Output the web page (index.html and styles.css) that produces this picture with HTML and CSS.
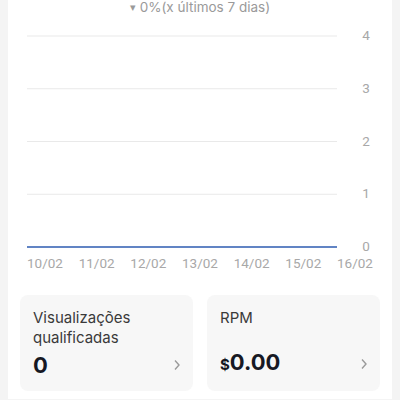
FILE: index.html
```html
<!DOCTYPE html>
<html>
<head>
  <title>Estatísticas</title>
  <link rel="stylesheet" href="styles.css">
</head>
<body>
  <div class="panel">
    <p class="change"><span class="caret">&#9662;</span> 0%(x últimos 7 dias)</p>
    <svg class="chart" width="384" height="280" viewBox="0 0 384 280">
      <g class="grid">
        <line x1="19" y1="36" x2="329" y2="36"/>
        <line x1="19" y1="88.75" x2="329" y2="88.75"/>
        <line x1="19" y1="141.5" x2="329" y2="141.5"/>
        <line x1="19" y1="194.25" x2="329" y2="194.25"/>
      </g>
      <line class="series" x1="19" y1="247" x2="329" y2="247"/>
      <g class="y-labels">
        <text x="358" y="40">4</text>
        <text x="358" y="93">3</text>
        <text x="358" y="146">2</text>
        <text x="358" y="198">1</text>
        <text x="358" y="251">0</text>
      </g>
      <g class="x-labels">
        <text x="19" y="268">10/02</text>
        <text x="70.7" y="268">11/02</text>
        <text x="122.3" y="268">12/02</text>
        <text x="174" y="268">13/02</text>
        <text x="225.7" y="268">14/02</text>
        <text x="277.3" y="268">15/02</text>
        <text x="329" y="268">16/02</text>
      </g>
    </svg>
    <div class="cards">
      <div class="card">
        <div class="card-title">Visualizações qualificadas</div>
        <div class="card-value">
          <span>0</span>
          <svg class="chevron" width="8" height="12" viewBox="0 0 8 12"><polyline points="2,1.5 6,6 2,10.5"/></svg>
        </div>
      </div>
      <div class="card">
        <div class="card-title">RPM</div>
        <div class="card-value">
          <span><small>$</small>0.00</span>
          <svg class="chevron" width="8" height="12" viewBox="0 0 8 12"><polyline points="2,1.5 6,6 2,10.5"/></svg>
        </div>
      </div>
    </div>
  </div>
</body>
</html>
```

FILE: styles.css
```css
* {
  box-sizing: border-box;
  font-family: Inter, Roboto, "Liberation Sans", sans-serif;
}
body {
  margin: 0;
  background-color: #f4f4f4;
  overflow: hidden;
}
.panel {
  margin: 0 8px;
  height: 400px;
  background-color: white;
}
.change {
  margin: -1px 0 0;
  text-align: center;
  font-size: 13.5px;
  line-height: 16px;
  color: #9a9a9a;
}
.caret {
  font-size: 11px;
  vertical-align: 1px;
}
.chart {
  display: block;
  margin-top: -15px;
}
.grid line {
  stroke: #e9e9e9;
  stroke-width: 1;
}
.series {
  stroke: #6184c4;
  stroke-width: 2;
}
.chart text {
  font-family: Roboto, sans-serif;
  font-size: 13.5px;
  fill: #a8a8a8;
}
.y-labels text {
  text-anchor: middle;
}
.cards {
  display: flex;
  gap: 14px;
  padding: 0 12px;
  margin-top: 15px;
}
.card {
  flex: 1;
  height: 96px;
  padding: 13px 12px 12px 13px;
  background-color: #f7f7f7;
  border-radius: 8px;
  display: flex;
  flex-direction: column;
  justify-content: space-between;
}
.card-title {
  font-size: 15px;
  line-height: 20px;
  color: #3a3a3a;
}
.card-value {
  display: flex;
  justify-content: space-between;
  align-items: center;
  font-size: 22px;
  line-height: 28px;
  font-weight: bold;
  color: #161823;
}
.card-value small {
  font-size: 15px;
}
.chevron polyline {
  fill: none;
  stroke: #9a9a9a;
  stroke-width: 1.4;
}
```
